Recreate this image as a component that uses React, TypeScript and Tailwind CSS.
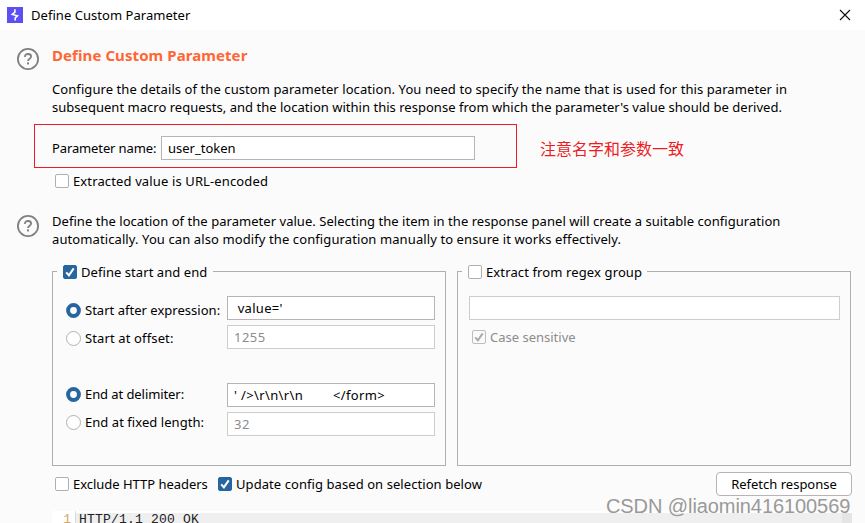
import React from "react";

function HelpIcon() {
  return (
    <svg width="24" height="24" viewBox="0 0 24 24" fill="none" className="shrink-0">
      <circle cx="12" cy="12" r="10.1" stroke="#808080" strokeWidth="1.8" />
      <path d="M8.9 9.9C8.9 7.9 10.1 7 12 7s3.1 1.1 3.1 2.5c0 2.2-3.1 2.2-3.1 4.6" stroke="#808080" strokeWidth="1.8" />
      <rect x="11" y="15.4" width="2" height="2" fill="#808080" />
    </svg>
  );
}

function Check({ on = false, disabled = false }: { on?: boolean; disabled?: boolean }) {
  const fill = disabled ? "#fbfbfb" : on ? "#26659e" : "#ffffff";
  const stroke = disabled ? "#bdbdbd" : on ? "#26659e" : "#b0b0b0";
  return (
    <svg width="14" height="14" viewBox="0 0 14 14" fill="none" className="shrink-0">
      <rect x="0.5" y="0.5" width="13" height="13" rx="1.5" fill={fill} stroke={stroke} />
      {on && <path d="M3.2 7.4L5.9 10.3L10.7 3.4" stroke={disabled ? "#ababab" : "#ffffff"} strokeWidth="2" />}
    </svg>
  );
}

function Radio({ on = false }: { on?: boolean }) {
  return (
    <svg width="15" height="15" viewBox="0 0 15 15" className="shrink-0">
      {on ? (
        <circle cx="7.5" cy="7.5" r="5.4" fill="#ffffff" stroke="#26659e" strokeWidth="4" />
      ) : (
        <circle cx="7.5" cy="7.5" r="7" fill="#ffffff" stroke="#b0b0b0" />
      )}
    </svg>
  );
}

function RadioRow({ on, label, className }: { on?: boolean; label: string; className: string }) {
  return (
    <div className="flex h-[18px] items-center gap-1">
      <Radio on={on} />
      <span className={className}>{label}</span>
    </div>
  );
}

function Field({ value, disabled = false, className = "" }: { value: string; disabled?: boolean; className?: string }) {
  return (
    <div
      className={`flex h-6 shrink-0 items-center border bg-white px-1.5 whitespace-pre ${
        disabled ? "border-[#cdcdcd] text-[#8c8c8c]" : "border-[#bab2b5] text-black"
      } ${className}`}
    >
      {value}
    </div>
  );
}

function Group({ on, label, gap, children }: { on?: boolean; label: React.ReactNode; gap: string; children: React.ReactNode }) {
  return (
    <div className="relative flex h-[195px] w-[394px] shrink-0 flex-col border border-[#afafaf]">
      <div className={`absolute -top-[9px] left-1 flex h-[18px] items-center gap-1 bg-[#fbfbfb] ${gap}`}>
        <Check on={on} />
        {label}
      </div>
      {children}
    </div>
  );
}

export default function App() {
  return (
    <div className="relative flex h-[523px] w-[865px] flex-col overflow-hidden bg-[#fbfbfb] font-['Noto_Sans','Noto_Sans_CJK_SC',sans-serif] text-[13px] leading-[18px] whitespace-nowrap text-black">
      <header className="flex h-[30px] shrink-0 items-center bg-white pr-[14px] pl-[7px]">
        <svg width="16" height="16" viewBox="0 0 16 16" className="shrink-0">
          <rect width="16" height="16" fill="#5b4ff5" />
          <path d="M7.9 2.2V5.2L5.3 7.4L10.4 8.8L8.2 10.8V13.6" fill="none" stroke="#fff" strokeWidth="1.6" />
        </svg>
        <span className="ml-2 tracking-[0.04px]">Define Custom Parameter</span>
        <svg width="12" height="12" viewBox="0 0 12 12" className="ml-auto" stroke="#111" strokeWidth="1.1">
          <path d="M1 1l10 10M11 1L1 11" />
        </svg>
      </header>

      <section className="flex h-[94px] shrink-0 gap-3 pt-[15px] pl-4">
        <div className="pt-0.5"><HelpIcon /></div>
        <div>
          <h1 className="text-[15px] leading-5 font-bold tracking-[0.08px] text-[#ff6633]">Define Custom Parameter</h1>
          <p className="mt-[15px] tracking-[0.08px]">
            Configure the details of the custom parameter location. You need to specify the name that is used for this parameter in
          </p>
          <p className="tracking-[0.02px]">subsequent macro requests, and the location within this response from which the parameter's value should be derived.</p>
        </div>
      </section>

      <section className="flex h-11 shrink-0 items-center pl-[34px]">
        <div className="flex h-11 w-[483px] items-center border border-[#ed1c24] pt-1 pl-[17px]">
          <span className="w-[109px] shrink-0 tracking-[-0.12px]">Parameter name:</span>
          <Field value="user_token" className="w-[314px]" />
        </div>
        <span className="ml-[23px] pt-[3px] font-['Noto_Sans_CJK_SC',sans-serif] text-[16px] text-[#ed1c24]">注意名字和参数一致</span>
      </section>

      <div className="mt-1 flex h-[18px] shrink-0 items-center gap-1 pl-[55px]">
        <Check />
        <span className="tracking-[0.13px]">Extracted value is URL-encoded</span>
      </div>

      <section className="mt-[22px] flex h-[59px] shrink-0 gap-3 pl-4">
        <div className="pt-0.5"><HelpIcon /></div>
        <div>
          <p className="tracking-[0.04px]">Define the location of the parameter value. Selecting the item in the response panel will create a suitable configuration</p>
          <p className="tracking-[0.1px]">automatically. You can also modify the configuration manually to ensure it works effectively.</p>
        </div>
      </section>

      <section className="flex shrink-0 gap-[11px] pl-[52px]">
        <Group on gap="w-[156px] pl-1.5" label={<span className="tracking-[0.06px]">Define start and end</span>}>
          <div className="flex pt-6 pl-[13px]">
            <div className="w-[161px] shrink-0 pt-[5px]">
              <RadioRow on label="Start after expression:" className="tracking-[0.02px]" />
              <div className="h-[10px]" />
              <RadioRow label="Start at offset:" className="tracking-[0.13px]" />
              <div className="h-[38px]" />
              <RadioRow on label="End at delimiter:" className="tracking-[-0.08px]" />
              <div className="h-[10px]" />
              <RadioRow label="End at fixed length:" className="tracking-[0.05px]" />
            </div>
            <div>
              <Field value=" value='" className="w-[208px] tracking-[0.3px]" />
              <Field value="1255" disabled className="mt-[5px] w-[208px] tracking-[0.5px]" />
              <Field value={"' />\\r\\n\\r\\n        </form>"} className="mt-[34px] w-[208px] tracking-[0.36px]" />
              <Field value="32" disabled className="mt-[5px] w-[208px] tracking-[0.5px]" />
            </div>
          </div>
        </Group>
        <Group gap="w-[185px] pl-1.5" label={<span className="tracking-[0.12px]">Extract from regex group</span>}>
          <div className="pt-6 pl-[11px]">
            <Field value="" disabled className="w-[371px]" />
            <div className="mt-2 ml-[3px] flex h-[18px] items-center gap-1 text-[#8c8c8c]">
              <Check on disabled />
              <span>Case sensitive</span>
            </div>
          </div>
        </Group>
      </section>

      <div className="mt-[6px] flex h-6 shrink-0 items-center gap-1 pr-[13px] pl-[55px]">
        <Check />
        <span className="w-[141px] tracking-[-0.03px]">Exclude HTTP headers</span>
        <Check on />
        <span className="tracking-[0.07px]">Update config based on selection below</span>
        <div className="ml-auto flex h-6 w-[136px] items-center justify-center rounded-[4px] border border-[#bab2b5] bg-white">
          <span>Refetch response</span>
        </div>
      </div>

      <div className="mt-[15px] ml-[52px] flex h-3 w-[800px] shrink-0 overflow-hidden bg-white font-['Liberation_Mono',monospace] text-[13px] text-[#222]">
        <div className="w-6 border-r border-[#dcdcdc] pr-1 text-right text-[#d4a56b]">1</div>
        <div className="mt-0.5 flex-1 bg-[#efefef] pl-[3px]"><span className="relative -top-0.5 tracking-[0.2px]">HTTP/1.1 200 OK</span></div>
        <div className="mt-0.5 w-[10px] bg-[#e5e5e5]" />
      </div>

      <div className="absolute top-[494px] left-[606px] font-['Liberation_Sans',sans-serif] text-[20px] leading-6 tracking-[-0.08px] text-[#999999]">
        CSDN @liaomin416100569
      </div>
    </div>
  );
}
